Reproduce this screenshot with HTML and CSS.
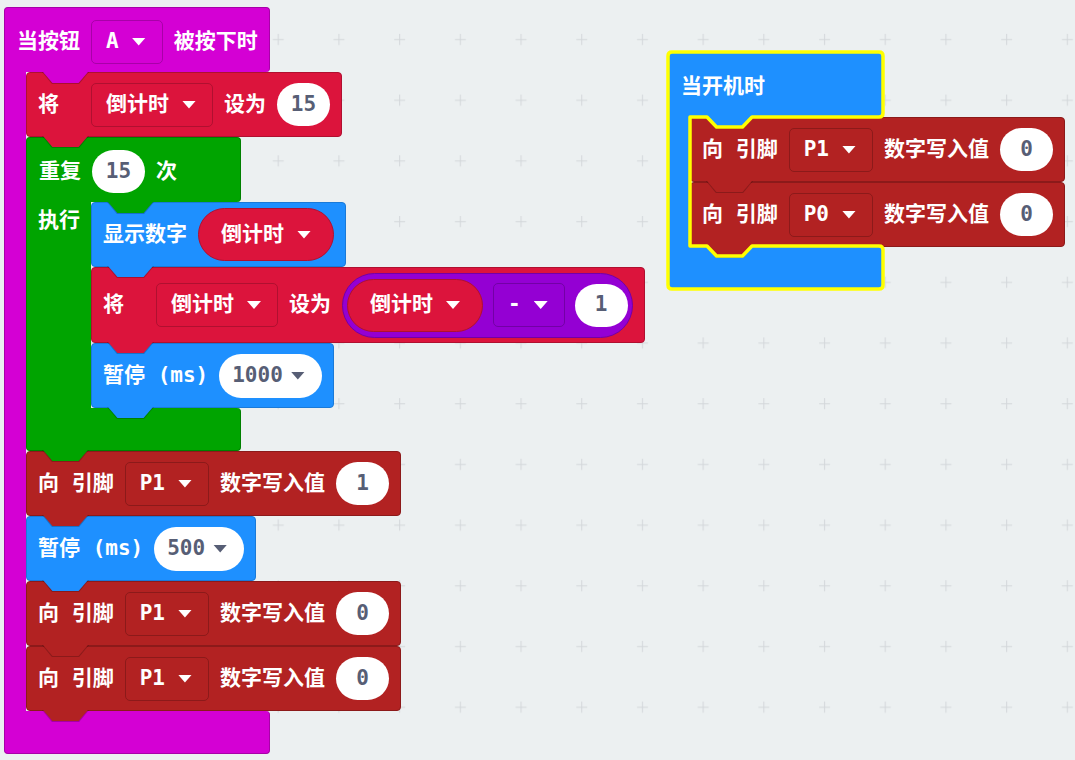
FILE: index.html
```html
<!DOCTYPE html>
<html lang="zh">
<head>
  <meta charset="UTF-8" />
  <meta name="viewport" content="width=device-width, initial-scale=1.0"/>
  <title>倒计时 | 积木编辑器</title>
  <link rel="stylesheet" href="styles.css">
</head>
<body>
  <div class="workspace">
    <svg class="grid" width="1075" height="760">
      <defs>
        <pattern id="grid-cross" x="5" y="9" width="60.7" height="60.7" patternUnits="userSpaceOnUse">
          <path d="M25 30.5h11M30.5 25v11" stroke="#d3d7da" stroke-width="1" />
        </pattern>
      </defs>
      <rect width="100%" height="100%" fill="url(#grid-cross)" />
    </svg>

    <!-- 按钮 A 事件 -->
    <div class="stack stack-button">
      <div class="c-block event magenta">
        <div class="c-head">
          <span>当按钮</span>
          <span class="dd">A<i class="caret"></i></span>
          <span>被按下时</span>
        </div>
        <div class="c-body">
          <div class="c-arm"></div>
          <div class="c-stack">
            <div class="block crimson">
              <span class="lead">将</span>
              <span class="dd">倒计时<i class="caret"></i></span>
              <span>设为</span>
              <span class="num">15</span>
            </div>

            <div class="c-block loop green">
              <div class="c-head">
                <span>重复</span>
                <span class="num">15</span>
                <span>次</span>
              </div>
              <div class="c-body">
                <div class="c-arm"><span class="arm-label">执行</span></div>
                <div class="c-stack">
                  <div class="block blue">
                    <span>显示数字</span>
                    <span class="reporter crimson">倒计时<i class="caret"></i></span>
                  </div>
                  <div class="block crimson tall">
                    <span class="lead">将</span>
                    <span class="dd">倒计时<i class="caret"></i></span>
                    <span>设为</span>
                    <span class="math purple">
                      <span class="reporter crimson">倒计时<i class="caret"></i></span>
                      <span class="dd">-<i class="caret"></i></span>
                      <span class="num">1</span>
                    </span>
                  </div>
                  <div class="block blue">
                    <span>暂停 (ms)</span>
                    <span class="pick">1000<i class="caret"></i></span>
                  </div>
                </div>
              </div>
              <div class="c-foot next"></div>
            </div>

            <div class="block pin">
              <span>向 引脚</span>
              <span class="dd">P1<i class="caret"></i></span>
              <span>数字写入值</span>
              <span class="num">1</span>
            </div>
            <div class="block blue">
              <span>暂停 (ms)</span>
              <span class="pick">500<i class="caret"></i></span>
            </div>
            <div class="block pin">
              <span>向 引脚</span>
              <span class="dd">P1<i class="caret"></i></span>
              <span>数字写入值</span>
              <span class="num">0</span>
            </div>
            <div class="block pin">
              <span>向 引脚</span>
              <span class="dd">P1<i class="caret"></i></span>
              <span>数字写入值</span>
              <span class="num">0</span>
            </div>
          </div>
        </div>
        <div class="c-foot"></div>
      </div>
    </div>

    <!-- 开机事件（选中） -->
    <div class="stack stack-start">
      <div class="c-block event blue">
        <div class="c-head">
          <span>当开机时</span>
        </div>
        <div class="c-body">
          <div class="c-arm"></div>
          <div class="c-stack">
            <div class="block pin">
              <span>向 引脚</span>
              <span class="dd">P1<i class="caret"></i></span>
              <span>数字写入值</span>
              <span class="num">0</span>
            </div>
            <div class="block pin">
              <span>向 引脚</span>
              <span class="dd">P0<i class="caret"></i></span>
              <span>数字写入值</span>
              <span class="num">0</span>
            </div>
          </div>
        </div>
        <div class="c-foot"></div>
      </div>
      <!-- selection outline around the whole C shape -->
      <svg class="select-ring" width="216" height="238">
        <path d="M0 4Q0 0 4 0H211Q215 0 215 4V61Q215 65 211 65H84L74.5 75H48.5L39 65H22V194H39L48.5 204H74.5L84 194H211Q215 194 215 198V233Q215 237 211 237H4Q0 237 0 233Z" />
      </svg>
    </div>
  </div>
</body>
</html>
```

FILE: styles.css
```css
body {
  margin: 0;
  background: #ecf0f1;
  font-family: "DejaVu Sans Mono", "Noto Sans CJK SC", monospace;
  font-size: 21px;
  font-weight: bold;
  line-height: 1.2;
  white-space: nowrap;
  color: #fff;
}

.workspace {
  position: relative;
  width: 1075px;
  height: 760px;
  overflow: hidden;
}

.grid {
  position: absolute;
  top: 0;
  left: 0;
}

.stack {
  position: absolute;
}

.stack-button {
  left: 4px;
  top: 7px;
}

.stack-start {
  left: 668px;
  top: 52px;
}

/* block colours */
.magenta { --fill: #d400d4; --edge: #a800a8; }
.crimson { --fill: #dc143c; --edge: #b01030; }
.green   { --fill: #00a400; --edge: #008000; }
.blue    { --fill: #1e90ff; --edge: #1a7ad8; }
.pin     { --fill: #b22222; --edge: #8c1a1a; }
.purple  { --fill: #9400d3; --edge: #7300a6; }

/* plain statement block */
.block {
  position: relative;
  display: flex;
  align-items: center;
  gap: 11px;
  box-sizing: border-box;
  min-height: 65px;
  padding: 0 11px;
  background: var(--fill);
  border: 1px solid var(--edge);
  border-radius: 4px;
}

.block > *,
.c-head > *,
.math > * {
  flex-shrink: 0;
}

.block.tall {
  padding-top: 4.5px;
  padding-bottom: 4.5px;
}

.lead {
  margin-right: 21px;
}

/* C shaped blocks (events, loops) */
.c-block {
  display: flex;
  flex-direction: column;
  align-items: flex-start;
}

.c-block.event { --arm: 22px; --w: 215px; }
.c-block.event.magenta { --w: 266px; }
.c-block.loop { --arm: 65px; --w: 215px; }

.c-head {
  position: relative;
  display: flex;
  align-items: center;
  gap: 11px;
  box-sizing: border-box;
  width: var(--w);
  height: 65px;
  padding: 3px 12px 0;
  background: var(--fill);
  border: 1px solid var(--edge);
  border-bottom: 0;
  border-radius: 4px 4px 4px 0;
}

.c-body {
  display: flex;
}

.c-arm {
  box-sizing: border-box;
  width: var(--arm);
  background: var(--fill);
  border-left: 1px solid var(--edge);
}

.arm-label {
  display: block;
  padding: 6px 0 0 11px;
}

.c-stack {
  display: flex;
  flex-direction: column;
  align-items: flex-start;
}

.c-foot {
  position: relative;
  box-sizing: border-box;
  width: var(--w);
  height: 43px;
  background: var(--fill);
  border: 1px solid var(--edge);
  border-top: 0;
  border-radius: 0 4px 4px 4px;
}

/* tab under a block that plugs into the notch of the next one */
.block::before,
.block::after,
.c-head::before,
.c-head::after,
.c-foot.next::before,
.c-foot.next::after {
  content: "";
  position: absolute;
  top: 100%;
  z-index: 2;
  clip-path: polygon(0 0, 100% 0, 79% 100%, 21% 100%);
}

.block::before,
.c-head::before,
.c-foot.next::before {
  left: 15px;
  width: 47px;
  height: 12px;
  background: rgba(0, 0, 0, 0.22);
}

.block::after,
.c-head::after,
.c-foot.next::after {
  left: 16px;
  width: 45px;
  height: 11px;
  background: var(--fill);
}

.c-head::before {
  left: calc(var(--arm) + 15px);
}

.c-head::after {
  left: calc(var(--arm) + 16px);
}

/* fields */
.dd {
  display: flex;
  align-items: center;
  gap: 13px;
  box-sizing: border-box;
  height: 44px;
  padding: 0 16px 0 14px;
  background: var(--fill);
  border: 1px solid var(--edge);
  border-radius: 5px;
}

.caret {
  display: block;
  width: 14px;
  height: 8px;
  background: currentColor;
  clip-path: polygon(0 0, 100% 0, 50% 100%);
}

.num {
  display: flex;
  align-items: center;
  justify-content: center;
  min-width: 53px;
  height: 43px;
  border-radius: 22px;
  background: #fff;
  color: #575e75;
}

.pick {
  display: flex;
  align-items: center;
  gap: 8px;
  height: 44px;
  padding: 0 17px 0 13px;
  border-radius: 22px;
  background: #fff;
  color: #575e75;
}

.reporter {
  display: flex;
  align-items: center;
  gap: 13px;
  box-sizing: border-box;
  height: 53px;
  padding: 0 22px;
  background: var(--fill);
  border: 1px solid var(--edge);
  border-radius: 27px;
}

.math {
  display: flex;
  align-items: center;
  gap: 10px;
  box-sizing: border-box;
  height: 65px;
  padding: 0 4px;
  background: var(--fill);
  border: 1px solid var(--edge);
  border-radius: 33px;
}

.select-ring {
  position: absolute;
  left: 0;
  top: 0;
  z-index: 3;
  overflow: visible;
  pointer-events: none;
}

.select-ring path {
  fill: none;
  stroke: #ffff00;
  stroke-width: 3.5;
  stroke-linejoin: round;
}
```
